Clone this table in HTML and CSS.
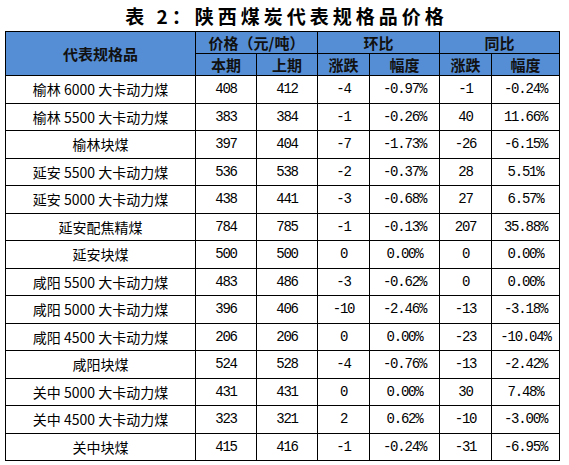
FILE: index.html
```html
<!DOCTYPE html>
<html lang="zh">
<head>
<meta charset="utf-8">
<title>表 2：陕西煤炭代表规格品价格</title>
<link rel="stylesheet" href="styles.css">
</head>
<body>
<div class="title">表 2：陕西煤炭代表规格品价格</div>
<table class="price">
  <colgroup>
    <col class="c1"><col class="c2"><col class="c3"><col class="c4"><col class="c5"><col class="c6"><col class="c7">
  </colgroup>
  <thead>
    <tr class="h1">
      <th rowspan="2">代表规格品</th>
      <th colspan="2">价格（元/吨）</th>
      <th colspan="2">环比</th>
      <th colspan="2">同比</th>
    </tr>
    <tr class="h2">
      <th>本期</th><th>上期</th><th>涨跌</th><th>幅度</th><th>涨跌</th><th>幅度</th>
    </tr>
  </thead>
  <tbody>
    <tr><td class="name">榆林 6000 大卡动力煤</td><td>408</td><td>412</td><td>-4</td><td>-0.97%</td><td>-1</td><td>-0.24%</td></tr>
    <tr><td class="name">榆林 5500 大卡动力煤</td><td>383</td><td>384</td><td>-1</td><td>-0.26%</td><td>40</td><td>11.66%</td></tr>
    <tr><td class="name">榆林块煤</td><td>397</td><td>404</td><td>-7</td><td>-1.73%</td><td>-26</td><td>-6.15%</td></tr>
    <tr><td class="name">延安 5500 大卡动力煤</td><td>536</td><td>538</td><td>-2</td><td>-0.37%</td><td>28</td><td>5.51%</td></tr>
    <tr><td class="name">延安 5000 大卡动力煤</td><td>438</td><td>441</td><td>-3</td><td>-0.68%</td><td>27</td><td>6.57%</td></tr>
    <tr><td class="name">延安配焦精煤</td><td>784</td><td>785</td><td>-1</td><td>-0.13%</td><td>207</td><td>35.88%</td></tr>
    <tr><td class="name">延安块煤</td><td>500</td><td>500</td><td>0</td><td>0.00%</td><td>0</td><td>0.00%</td></tr>
    <tr><td class="name">咸阳 5500 大卡动力煤</td><td>483</td><td>486</td><td>-3</td><td>-0.62%</td><td>0</td><td>0.00%</td></tr>
    <tr><td class="name">咸阳 5000 大卡动力煤</td><td>396</td><td>406</td><td>-10</td><td>-2.46%</td><td>-13</td><td>-3.18%</td></tr>
    <tr><td class="name">咸阳 4500 大卡动力煤</td><td>206</td><td>206</td><td>0</td><td>0.00%</td><td>-23</td><td>-10.04%</td></tr>
    <tr><td class="name">咸阳块煤</td><td>524</td><td>528</td><td>-4</td><td>-0.76%</td><td>-13</td><td>-2.42%</td></tr>
    <tr><td class="name">关中 5000 大卡动力煤</td><td>431</td><td>431</td><td>0</td><td>0.00%</td><td>30</td><td>7.48%</td></tr>
    <tr><td class="name">关中 4500 大卡动力煤</td><td>323</td><td>321</td><td>2</td><td>0.62%</td><td>-10</td><td>-3.00%</td></tr>
    <tr><td class="name">关中块煤</td><td>415</td><td>416</td><td>-1</td><td>-0.24%</td><td>-31</td><td>-6.95%</td></tr>
  </tbody>
</table>
</body>
</html>
```

FILE: styles.css
```css
html, body {
  margin: 0;
  padding: 0;
  background: #ffffff;
}

.title {
  height: 31px;
  line-height: 31px;
  text-align: center;
  font-family: "Noto Sans CJK SC", sans-serif;
  font-weight: 700;
  font-size: 19px;
  letter-spacing: 4px;
  color: #000;
  padding-left: 4px;
}

.price {
  margin-left: 5px;
  width: 555px;
  border-collapse: collapse;
  table-layout: fixed;
  border: 1px solid #000;
}

.c1 { width: 190px; }
.c2 { width: 61px; }
.c3 { width: 61px; }
.c4 { width: 52px; }
.c5 { width: 70px; }
.c6 { width: 52px; }
.c7 { width: 68px; }

.price th,
.price td {
  border: 1px solid #000;
  padding: 0;
  text-align: center;
  vertical-align: middle;
  white-space: nowrap;
  overflow: hidden;
}

.price th {
  background: #558ed5;
  font-family: "Noto Sans CJK SC", sans-serif;
  font-weight: 700;
  font-size: 15px;
  color: #111;
  line-height: 18px;
}

.h1, .h2 {
  height: 22px;
}

.price tbody tr {
  height: 27.5px;
}

.price td {
  font-family: "Liberation Mono", monospace;
  font-size: 14px;
  letter-spacing: -1.2px;
  color: #000;
  line-height: 18px;
}

.price td.name {
  font-family: "Noto Sans CJK SC", sans-serif;
  font-size: 14px;
  letter-spacing: 0;
}
```
